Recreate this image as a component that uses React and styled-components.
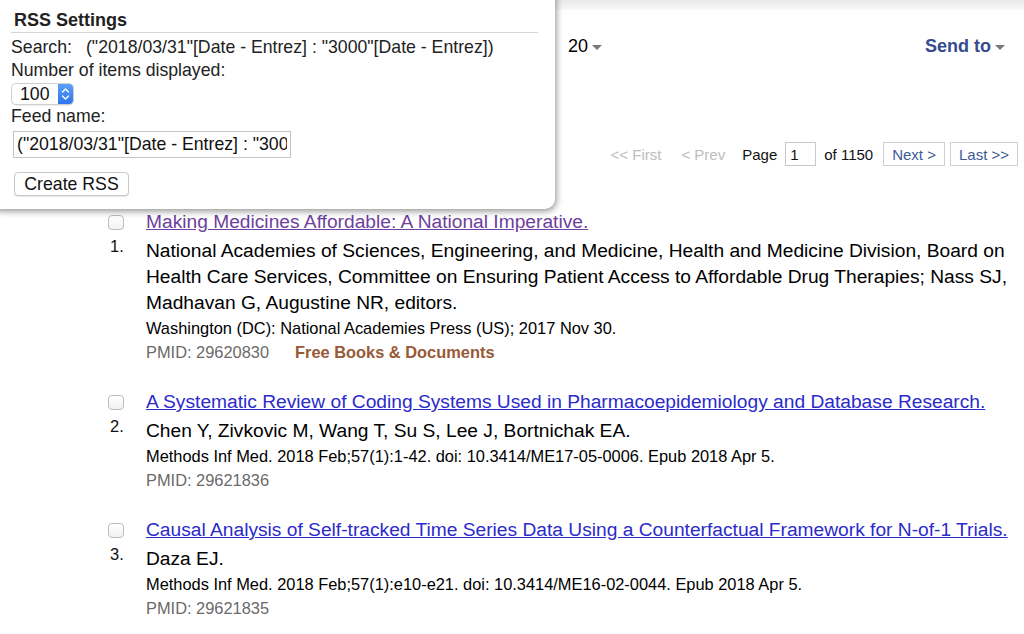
import React from 'react'
import styled, { createGlobalStyle } from 'styled-components'

const GlobalStyle = createGlobalStyle`
  html, body {
    margin: 0;
    padding: 0;
    background: #fff;
  }
  body {
    font-family: "Liberation Sans", Arial, sans-serif;
    color: #000;
  }
`

const Page = styled.div`
  position: relative;
  width: 1024px;
  height: 634px;
  overflow: hidden;
  background: linear-gradient(#e9e9e9, #f5f5f5 8px, #fff 11px) top / 100% 12px no-repeat, #fff;
`

const Main = styled.div`
  display: flex;
  flex-direction: column;
  padding-right: 6px;
`

const DisplayBar = styled.div`
  height: 92px;
  display: flex;
  align-items: center;
  justify-content: space-between;
  padding-left: 568px;
  padding-right: 13px;
`

const Drop = styled.span`
  display: inline-flex;
  align-items: center;
  gap: 4px;
  font-size: 18px;
  font-weight: ${p => (p.$bold ? 'bold' : 'normal')};
  color: ${p => p.$color || '#000'};
`

const Caret = styled.span`
  display: inline-block;
  width: 0;
  height: 0;
  margin-top: 3px;
  border-left: 5px solid transparent;
  border-right: 5px solid transparent;
  border-top: 5px solid #7a7a7a;
`

const Pager = styled.div`
  margin-top: 50px;
  height: 24px;
  display: flex;
  align-items: center;
  justify-content: flex-end;
  font-size: 15px;
  color: #111;
`

const PagerText = styled.span`
  color: ${p => (p.$disabled ? '#bdbdbd' : '#111')};
  margin-right: ${p => p.$gap || 0}px;
`

const PageInput = styled.input`
  width: 31px;
  height: 24px;
  box-sizing: border-box;
  border: 1px solid #c9c9c9;
  padding: 0 4px;
  margin-right: 8px;
  font: 15px "Liberation Sans", Arial, sans-serif;
  color: #111;
`

const PagerButton = styled.span`
  display: inline-flex;
  align-items: center;
  height: 24px;
  box-sizing: border-box;
  padding: 0 8px;
  border: 1px solid #cfcfcf;
  color: #3c5a98;
  margin-left: ${p => p.$gap || 0}px;
`

const ResultList = styled.div`
  margin-top: 44px;
  padding-left: 108px;
`

const Item = styled.div`
  display: grid;
  grid-template-columns: 38px 1fr;
  margin-bottom: 26px;
`

const Marker = styled.div`
  display: flex;
  flex-direction: column;
  align-items: flex-start;
`

const Check = styled.span`
  width: 16px;
  height: 15px;
  margin-top: 5px;
  box-sizing: border-box;
  border: 1px solid #bcbcbc;
  border-radius: 4px;
  background: linear-gradient(#fff, #f2f2f2);
`

const Num = styled.span`
  margin-top: 7px;
  margin-left: 2px;
  font-size: 16.5px;
  line-height: 18px;
  color: #111;
`

const Title = styled.a`
  display: block;
  font-size: 19.2px;
  line-height: 24px;
  margin-bottom: 4px;
  color: ${p => (p.$visited ? '#6e3f9d' : '#2b2bcc')};
  text-decoration: underline;
`

const Authors = styled.div`
  font-size: 19.2px;
  line-height: 26px;
  color: #000;
`

const Citation = styled.div`
  font-size: 16.4px;
  line-height: 24px;
  color: #000;
`

const Meta = styled.div`
  font-size: 16.4px;
  line-height: 24px;
  color: #6a6a6a;
  display: flex;
  gap: 26px;
`

const FreeTag = styled.span`
  font-weight: bold;
  color: #985a36;
`

const Popup = styled.div`
  position: absolute;
  left: -10px;
  top: -10px;
  width: 565px;
  box-sizing: border-box;
  padding: 18px 17px 13px 21px;
  background: #fff;
  border-radius: 10px;
  box-shadow: 1px 2px 7px rgba(0, 0, 0, 0.45);
  font-size: 17.7px;
  color: #222;
`

const PopupHeader = styled.div`
  font-size: 18px;
  font-weight: bold;
  line-height: 24px;
  padding-left: 3px;
  border-bottom: 1px solid #d6d6d6;
  color: #222;
`

const PopupLine = styled.div`
  line-height: 23px;
  margin-top: ${p => p.$top || 0}px;
  display: flex;
  gap: 14px;
`

const SelectBox = styled.div`
  width: 63px;
  height: 22px;
  margin-top: 1px;
  box-sizing: border-box;
  border: 1px solid #d0d0d0;
  border-radius: 5px;
  display: flex;
  align-items: center;
  justify-content: space-between;
  overflow: hidden;
  background: #fff;
  box-shadow: 0 1px 1px rgba(0, 0, 0, 0.08);
`

const SelectValue = styled.span`
  padding-left: 8px;
  font-size: 17.7px;
  color: #111;
`

const Stepper = styled.span`
  width: 15px;
  height: 100%;
  display: flex;
  align-items: center;
  justify-content: center;
  background: linear-gradient(#5aa0fb, #2f74ea);
`

const FeedInput = styled.input`
  display: block;
  width: 278px;
  height: 27px;
  margin: 3px 0 0 2px;
  box-sizing: border-box;
  border: 1px solid #c4c4c4;
  padding: 0 3px;
  font: 17.7px "Liberation Sans", Arial, sans-serif;
  color: #111;
`

const CreateButton = styled.button`
  display: block;
  margin: 14px 0 0 3px;
  height: 24px;
  width: 115px;
  box-sizing: border-box;
  border: 1px solid #c8c8c8;
  border-radius: 4px;
  background: #fff;
  box-shadow: 0 1px 1px rgba(0, 0, 0, 0.1);
  font: 17.7px "Liberation Sans", Arial, sans-serif;
  color: #111;
  padding: 0;
`

const results = [
  {
    title: 'Making Medicines Affordable: A National Imperative.',
    visited: true,
    authors:
      'National Academies of Sciences, Engineering, and Medicine, Health and Medicine Division, Board on Health Care Services, Committee on Ensuring Patient Access to Affordable Drug Therapies; Nass SJ, Madhavan G, Augustine NR, editors.',
    citation: 'Washington (DC): National Academies Press (US); 2017 Nov 30.',
    pmid: '29620830',
    free: true,
  },
  {
    title: 'A Systematic Review of Coding Systems Used in Pharmacoepidemiology and Database Research.',
    authors: 'Chen Y, Zivkovic M, Wang T, Su S, Lee J, Bortnichak EA.',
    citation: 'Methods Inf Med. 2018 Feb;57(1):1-42. doi: 10.3414/ME17-05-0006. Epub 2018 Apr 5.',
    pmid: '29621836',
  },
  {
    title: 'Causal Analysis of Self-tracked Time Series Data Using a Counterfactual Framework for N-of-1 Trials.',
    authors: 'Daza EJ.',
    citation: 'Methods Inf Med. 2018 Feb;57(1):e10-e21. doi: 10.3414/ME16-02-0044. Epub 2018 Apr 5.',
    pmid: '29621835',
  },
]

const query = '("2018/03/31"[Date - Entrez] : "3000"[Date - Entrez])'

const App = () => {
  return (
    <Page>
      <GlobalStyle />
      <Main>
        <DisplayBar>
          <Drop>
            20 <Caret />
          </Drop>
          <Drop $bold $color="#354b8d">
            Send to <Caret />
          </Drop>
        </DisplayBar>

        <Pager>
          <PagerText $disabled $gap={20}>&lt;&lt; First</PagerText>
          <PagerText $disabled $gap={17}>&lt; Prev</PagerText>
          <PagerText $gap={8}>Page</PagerText>
          <PageInput value="1" readOnly />
          <PagerText>of 1150</PagerText>
          <PagerButton $gap={10}>Next &gt;</PagerButton>
          <PagerButton $gap={5}>Last &gt;&gt;</PagerButton>
        </Pager>

        <ResultList>
          {results.map((r, i) => (
            <Item key={r.pmid}>
              <Marker>
                <Check />
                <Num>{i + 1}.</Num>
              </Marker>
              <div>
                <Title href="#" $visited={r.visited}>{r.title}</Title>
                <Authors>{r.authors}</Authors>
                <Citation>{r.citation}</Citation>
                <Meta>
                  <span>PMID: {r.pmid}</span>
                  {r.free && <FreeTag>Free Books &amp; Documents</FreeTag>}
                </Meta>
              </div>
            </Item>
          ))}
        </ResultList>
      </Main>

      <Popup>
        <PopupHeader>RSS Settings</PopupHeader>
        <PopupLine $top={3}>
          <span>Search:</span>
          <span>{query}</span>
        </PopupLine>
        <PopupLine>Number of items displayed:</PopupLine>
        <SelectBox>
          <SelectValue>100</SelectValue>
          <Stepper>
            <svg width="9" height="14" viewBox="0 0 9 14" fill="none" stroke="#fff" strokeWidth="1.4" strokeLinecap="round" strokeLinejoin="round">
              <polyline points="1.5,5 4.5,2 7.5,5" />
              <polyline points="1.5,9 4.5,12 7.5,9" />
            </svg>
          </Stepper>
        </SelectBox>
        <PopupLine>Feed name:</PopupLine>
        <FeedInput value={query} readOnly />
        <CreateButton>Create RSS</CreateButton>
      </Popup>
    </Page>
  )
}

export default App
